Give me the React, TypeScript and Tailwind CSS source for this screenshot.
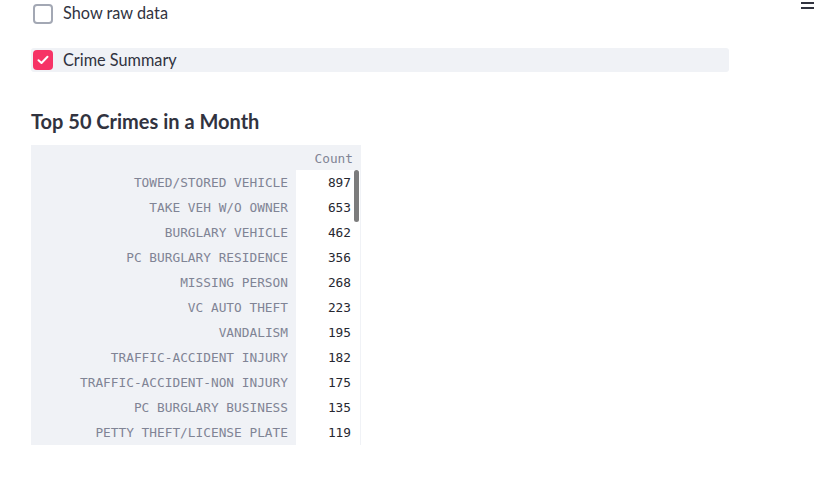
import React from "react";

const rows: [string, number][] = [
  ["TOWED/STORED VEHICLE", 897],
  ["TAKE VEH W/O OWNER", 653],
  ["BURGLARY VEHICLE", 462],
  ["PC BURGLARY RESIDENCE", 356],
  ["MISSING PERSON", 268],
  ["VC AUTO THEFT", 223],
  ["VANDALISM", 195],
  ["TRAFFIC-ACCIDENT INJURY", 182],
  ["TRAFFIC-ACCIDENT-NON INJURY", 175],
  ["PC BURGLARY BUSINESS", 135],
  ["PETTY THEFT/LICENSE PLATE", 119],
];

export default function App() {
  return (
    <div
      className="relative w-[823px] h-[480px] bg-white overflow-hidden text-[#31333f]"
      style={{ fontFamily: 'Lato, "Noto Sans", sans-serif' }}
    >
      <div className="absolute right-[9px] top-[2px] flex flex-col gap-[3px]">
        <div className="w-[13px] h-[2px] bg-[#31333f]" />
        <div className="w-[13px] h-[2px] bg-[#31333f]" />
      </div>
      <div className="pl-[31px] pt-[2px]">
        <div className="flex items-center h-[23px] gap-[10px] pl-[2px]">
          <div className="w-[20px] h-[20px] rounded-[4px] border-2 border-[#a3a8b4] bg-white" />
          <span className="text-[16.3px]">Show raw data</span>
        </div>
        <div className="mt-[23px] w-[698px] h-[24px] bg-[#f0f2f6] rounded-[3px] flex items-center gap-[10px] pl-[2px]">
          <div className="w-[20px] h-[20px] rounded-[4px] bg-[#f63366] flex items-center justify-center">
            <svg width="12" height="10" viewBox="0 0 12 10">
              <path d="M1.5 5.2 L4.5 8 L10.5 1.8" stroke="white" strokeWidth="2" fill="none" strokeLinecap="round" strokeLinejoin="round" />
            </svg>
          </div>
          <span className="text-[16.3px]">Crime Summary</span>
        </div>
        <h2 className="mt-[35px] mb-[1px] text-[20px] font-bold leading-[28px]">Top 50 Crimes in a Month</h2>
        <div
          className="mt-[10px] w-[330px] h-[300px] bg-[#f0f2f6] relative overflow-hidden"
          style={{ fontFamily: '"DejaVu Sans Mono", monospace' }}
        >
          <div className="flex h-[25px] text-[12.8px] pt-[1px]">
            <div className="w-[265px]" />
            <div className="w-[65px] text-right pr-[8px] leading-[25px] text-[#808495]">Count</div>
          </div>
          {rows.map(([k, v]) => (
            <div key={k} className="flex h-[25px] text-[12.8px]">
              <div className="w-[265px] text-right pr-[8px] pt-[1px] leading-[24px] text-[#808495]">{k}</div>
              <div className="w-[64px] bg-white text-right pr-[9px] pt-[1px] leading-[24px] text-[#262730]">{v}</div>
            </div>
          ))}
          <div className="absolute left-[323px] top-[25px] w-[5px] h-[52px] rounded-full bg-[#7c7c7c]" />
        </div>
      </div>
    </div>
  );
}
